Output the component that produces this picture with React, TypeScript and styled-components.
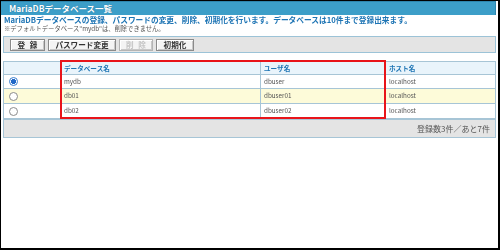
import React, { useState } from "react";
import styled, { createGlobalStyle } from "styled-components";

const GlobalStyle = createGlobalStyle`
  *, *::before, *::after { box-sizing: border-box; }
  html, body { margin: 0; padding: 0; background: #fff; }
  body { font-family: "Noto Sans CJK JP", "Noto Sans", sans-serif; }
`;

const Frame = styled.div`
  width: 500px;
  height: 250px;
  border: 1px solid #000;
  border-right-width: 2px;
  border-bottom-width: 2px;
  padding-right: 2px;
  background: #fff;
  overflow: hidden;
`;

const TitleBar = styled.h1`
  margin: 0;
  height: 14px;
  background: #3c9ec8;
  border-top: 1px solid #2d85ad;
  border-right: 1px solid #2d85ad;
  padding-left: 8px;
  color: #fff;
  font-size: 8.5px;
  font-weight: 700;
  line-height: 13px;
  text-shadow: 0 0 1px rgba(0, 60, 100, 0.6);
  white-space: nowrap;
`;

const Content = styled.div`
  padding-left: 2px;
  will-change: transform;
`;

const Lead = styled.p<{ $tone: "info" | "note" }>`
  margin: 0;
  padding-left: 1px;
  height: 9px;
  line-height: 9px;
  white-space: nowrap;
  font-size: ${(p) => (p.$tone === "info" ? "7.7px" : "6.3px")};
  font-weight: ${(p) => (p.$tone === "info" ? 700 : 400)};
  color: ${(p) => (p.$tone === "info" ? "#1d74b4" : "#555")};
`;

const Toolbar = styled.div`
  margin-top: 3px;
  height: 17px;
  display: flex;
  align-items: center;
  gap: 3px;
  padding-left: 6px;
  background: #e4e4e4;
  border: 1px solid #9cc3d7;
`;

const ToolButton = styled.button<{ $w: number }>`
  width: ${(p) => p.$w}px;
  height: 12px;
  padding: 0;
  margin: 0;
  background: #f4f4f4;
  border: 1px solid #8a8a8a;
  box-shadow: inset 1px 1px 0 #fff, inset -1px -1px 0 #c8c8c8;
  font-family: inherit;
  font-size: 7.6px;
  font-weight: 700;
  line-height: 10px;
  word-spacing: 3px;
  color: #333;
  white-space: nowrap;
  cursor: pointer;
  &:disabled {
    color: #c4c4c4;
    border-color: #b4b4b4;
    cursor: default;
  }
`;

const TableWrap = styled.div`
  position: relative;
  margin-top: 8px;
`;

const Grid = styled.table`
  width: 100%;
  border-collapse: collapse;
  table-layout: fixed;
  border: 1px solid #a7c5d6;
`;

const HeadCell = styled.th`
  height: 13px;
  padding: 0 0 0 3px;
  background: #e9f4fb;
  border: 1px solid #a7c5d6;
  text-align: left;
  color: #1d74b4;
  font-size: 6.6px;
  font-weight: 700;
  line-height: 11px;
  white-space: nowrap;
`;

const Row = styled.tr<{ $alt: boolean }>`
  background: ${(p) => (p.$alt ? "#fdfbd9" : "#fff")};
`;

const Cell = styled.td<{ $h: number }>`
  height: ${(p) => p.$h}px;
  padding: 0 0 0 3px;
  border: 1px solid #a7c5d6;
  color: #555;
  font-size: 6.3px;
  line-height: 10px;
  white-space: nowrap;
`;

const RadioCell = styled(Cell)`
  padding-left: 5px;
`;

const Radio = styled.input.attrs({ type: "radio" })`
  appearance: none;
  display: block;
  margin: 0;
  width: 9px;
  height: 9px;
  border-radius: 50%;
  border: 1px solid #8c8c8c;
  background: #fff;
  cursor: pointer;
  &:checked {
    border-color: #3a7fd0;
    background: radial-gradient(circle, #2068c8 0 2.3px, #fff 2.8px);
  }
`;

const Highlight = styled.div`
  position: absolute;
  left: 57px;
  top: -1px;
  width: 326px;
  height: 59px;
  border: 2px solid #e8141a;
  pointer-events: none;
`;

const Footer = styled.div`
  height: 19px;
  display: flex;
  align-items: center;
  justify-content: flex-end;
  padding-right: 5px;
  background: #e4e4e4;
  border: 1px solid #a7c5d6;
  color: #555;
  font-size: 8px;
  white-space: nowrap;
`;

const rows = [
  { db: "mydb", user: "dbuser", host: "localhost" },
  { db: "db01", user: "dbuser01", host: "localhost" },
  { db: "db02", user: "dbuser02", host: "localhost" },
];

export default function App() {
  const [sel, setSel] = useState(0);
  return (
    <>
      <GlobalStyle />
      <Frame>
        <TitleBar>MariaDBデータベース一覧</TitleBar>
        <Content>
          <Lead $tone="info">
            MariaDBデータベースの登録、パスワードの変更、削除、初期化を行います。データベースは10件まで登録出来ます。
          </Lead>
          <Lead $tone="note">※デフォルトデータベース"mydb"は、削除できません。</Lead>
          <Toolbar>
            <ToolButton $w={35}>登 録</ToolButton>
            <ToolButton $w={68}>パスワード変更</ToolButton>
            <ToolButton $w={34} disabled>
              削 除
            </ToolButton>
            <ToolButton $w={38}>初期化</ToolButton>
          </Toolbar>
          <TableWrap>
            <Grid>
              <colgroup>
                <col style={{ width: 57 }} />
                <col style={{ width: 200 }} />
                <col style={{ width: 125 }} />
                <col />
              </colgroup>
              <thead>
                <tr>
                  <HeadCell />
                  <HeadCell>データベース名</HeadCell>
                  <HeadCell>ユーザ名</HeadCell>
                  <HeadCell>ホスト名</HeadCell>
                </tr>
              </thead>
              <tbody>
                {rows.map((r, i) => (
                  <Row key={r.db} $alt={i === 1}>
                    <RadioCell $h={i === 0 ? 14 : 15}>
                      <Radio name="db" checked={sel === i} onChange={() => setSel(i)} />
                    </RadioCell>
                    <Cell $h={i === 0 ? 14 : 15}>{r.db}</Cell>
                    <Cell $h={i === 0 ? 14 : 15}>{r.user}</Cell>
                    <Cell $h={i === 0 ? 14 : 15}>{r.host}</Cell>
                  </Row>
                ))}
              </tbody>
            </Grid>
            <Highlight />
          </TableWrap>
          <Footer>登録数3件／あと7件</Footer>
        </Content>
      </Frame>
    </>
  );
}
